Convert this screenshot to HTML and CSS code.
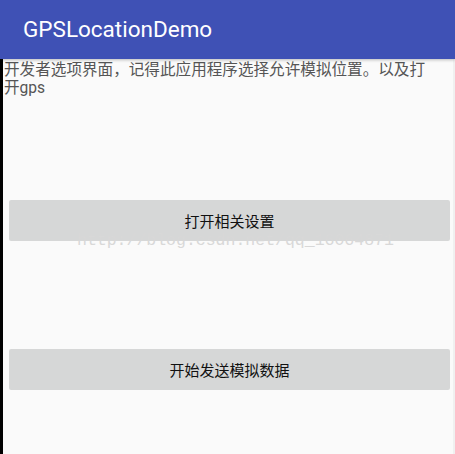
FILE: index.html
```html
<!DOCTYPE html>
<html lang="zh-CN">
<head>
  <meta charset="UTF-8">
  <meta name="viewport" content="width=device-width, initial-scale=1.0">
  <title>GPSLocationDemo</title>
  <link rel="stylesheet" href="styles.css">
</head>
<body>

  <!-- 标题栏 -->
  <div class="toolbar">
    <h1 class="toolbar-title">GPSLocationDemo</h1>
  </div>

  <!-- 内容 -->
  <div class="content">
    <p class="hint">开发者选项界面，记得此应用程序选择允许模拟位置。以及打开gps</p>

    <div class="actions">
      <button class="btn">打开相关设置</button>
      <button class="btn">开始发送模拟数据</button>
    </div>

    <div class="watermark">http://blog.csdn.net/qq_16064871</div>
  </div>

</body>
</html>
```

FILE: styles.css
```css
body {
  margin: 0;
  padding: 0;
  background-color: #fafafa;
  font-family: Roboto, "Noto Sans CJK SC", sans-serif;
  overflow: hidden;
}

.toolbar {
  height: 59px;
  background-color: #3f51b5;
  display: flex;
  align-items: center;
  padding-left: 23px;
  box-shadow: 0 1px 3px rgba(0, 0, 0, 0.25);
  position: relative;
  z-index: 1;
}

.toolbar-title {
  margin: 0;
  margin-top: -2px;
  font-size: 22.5px;
  font-weight: 400;
  color: #fff;
}

.content {
  position: relative;
  height: 395px;
  border-left: 3px solid #000;
  border-right: 2px solid #f0f0f0;
}

.hint {
  margin: 0;
  padding: 2px 0 0 1px;
  width: 428px;
  font-size: 15.6px;
  line-height: 18px;
  color: #555;
}

.actions {
  display: flex;
  flex-direction: column;
  gap: 108px;
  padding: 103px 0 0 6px;
}

.btn {
  width: 441px;
  height: 41px;
  border: none;
  border-radius: 2px;
  background-color: #d6d7d7;
  color: #111;
  font-family: Roboto, "Noto Sans CJK SC", sans-serif;
  font-size: 15px;
  padding: 0;
}

/* 水印 */
.watermark {
  position: absolute;
  left: 74px;
  top: 174px;
  font-family: "Liberation Mono", monospace;
  font-size: 16.5px;
  line-height: 16px;
  color: #d8d8d8;
  white-space: nowrap;
}
```
